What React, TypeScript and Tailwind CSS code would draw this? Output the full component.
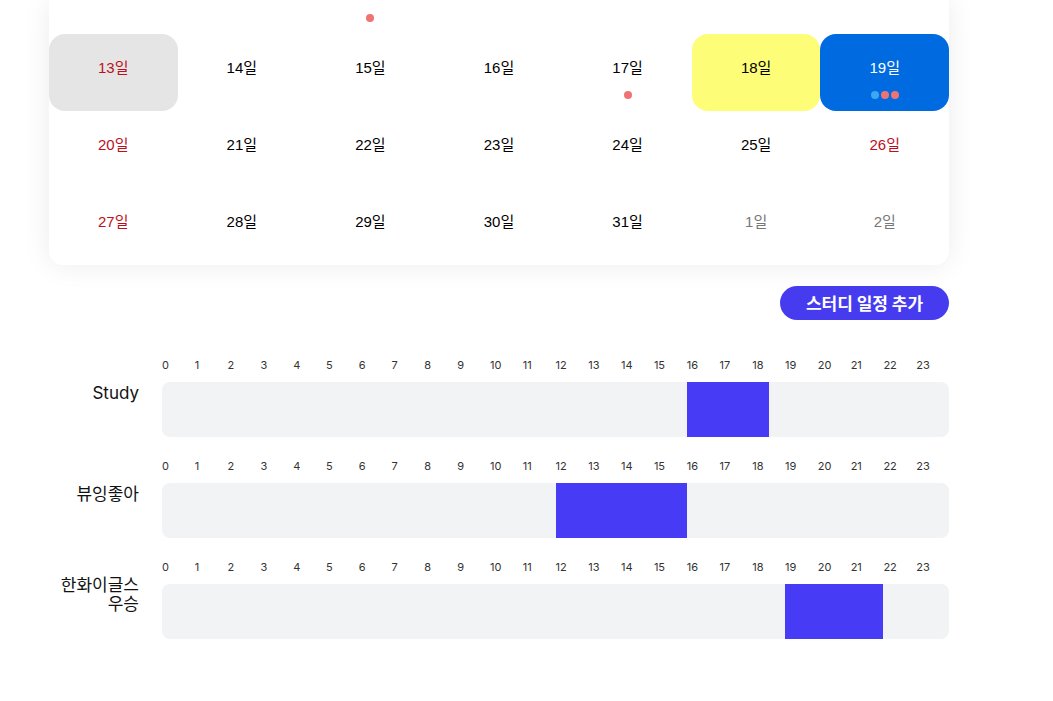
import React from "react";

type Day = { d: number; tone?: "red" | "gray"; bg?: string; text?: string; dots?: string[] };

// only the tail of the week above is in view: its dot under the 8th
const topDots: (string[] | null)[] = [null, null, ["#f07373"], null, null, null, null];

const weeks: Day[][] = [
  [
    { d: 13, tone: "red", bg: "bg-[#e5e5e5]" },
    { d: 14 },
    { d: 15 },
    { d: 16 },
    { d: 17, dots: ["#f07373"] },
    { d: 18, bg: "bg-[#fdfd77]" },
    { d: 19, bg: "bg-[#006be0]", text: "text-white", dots: ["#3fa6f2", "#f07373", "#f07373"] },
  ],
  [
    { d: 20, tone: "red" },
    { d: 21 },
    { d: 22 },
    { d: 23 },
    { d: 24 },
    { d: 25 },
    { d: 26, tone: "red" },
  ],
  [
    { d: 27, tone: "red" },
    { d: 28 },
    { d: 29 },
    { d: 30 },
    { d: 31 },
    { d: 1, tone: "gray" },
    { d: 2, tone: "gray" },
  ],
];

const studies = [
  { name: "Study", start: 16, end: 18.5 },
  { name: "뷰잉좋아", start: 12, end: 16 },
  { name: "한화이글스 우승", start: 19, end: 22 },
];

const hours = Array.from({ length: 24 }, (_, i) => i);

function Dots({ colors }: { colors: string[] }) {
  return (
    <div className="flex gap-[2px]">
      {colors.map((c, i) => (
        <span key={i} className="w-[8px] h-[8px] rounded-full" style={{ backgroundColor: c }} />
      ))}
    </div>
  );
}

function DayCell({ day }: { day: Day }) {
  const color = day.text
    ? day.text
    : day.tone === "red"
    ? "text-[#bd0f1c]"
    : day.tone === "gray"
    ? "text-[#777777]"
    : "text-black";
  return (
    <div className={`h-[77px] rounded-2xl flex flex-col items-center pt-[24px] ${day.bg ?? ""}`}>
      <span className={`text-[15px] leading-[20px] ${color}`}>{day.d}일</span>
      {day.dots && (
        <div className="mt-[13px]">
          <Dots colors={day.dots} />
        </div>
      )}
    </div>
  );
}

export default function App() {
  return (
    <div className="min-h-screen bg-white overflow-hidden">
      <div className="ml-[49px] w-[900px]">
        {/* Calendar */}
        <div
          className="bg-white rounded-b-[14px] shadow-[0_0_28px_rgba(0,0,0,0.08)]"
          style={{ fontFamily: '"Liberation Sans", Arial, "Noto Sans CJK KR", sans-serif' }}
        >
          <div className="grid grid-cols-7 h-[34px]">
            {topDots.map((d, i) => (
              <div key={i} className="flex justify-center pt-[14px]">
                {d && <Dots colors={d} />}
              </div>
            ))}
          </div>
          {weeks.map((w, wi) => (
            <div key={wi} className="grid grid-cols-7">
              {w.map((day, di) => (
                <DayCell key={di} day={day} />
              ))}
            </div>
          ))}
        </div>

        <div style={{ fontFamily: 'Inter, "Noto Sans CJK KR", sans-serif' }}>
          {/* Add button */}
          <div className="flex justify-end mt-[21px]">
            <button
              className="h-[34px] w-[169px] rounded-full bg-[#473bf0] text-white text-[17px] leading-[34px] font-bold"
              style={{ fontFamily: '"Noto Sans CJK KR", sans-serif' }}
            >
              스터디 일정 추가
            </button>
          </div>

          {/* Timeline */}
          <div className="mt-[37px] flex flex-col">
            {studies.map((s) => (
              <div key={s.name} className="flex items-center mb-[21px]">
                <div className="w-[90px] pb-[8px] text-right text-[17px] leading-[19px] text-[#111111] shrink-0">
                  {s.name}
                </div>
                <div className="ml-[23px] flex-1">
                  <div className="grid grid-cols-[repeat(24,minmax(0,1fr))] h-[16px] text-[11px] leading-[16px] text-[#333333]">
                    {hours.map((h) => (
                      <span key={h}>{h}</span>
                    ))}
                  </div>
                  <div className="relative mt-[9px] h-[55px] rounded-lg bg-[#f2f3f5] overflow-hidden">
                    <div
                      className="absolute top-0 bottom-0 bg-[#473bf5]"
                      style={{
                        left: `${(s.start / 24) * 100}%`,
                        width: `${((s.end - s.start) / 24) * 100}%`,
                      }}
                    />
                  </div>
                </div>
              </div>
            ))}
          </div>
        </div>
      </div>
    </div>
  );
}
